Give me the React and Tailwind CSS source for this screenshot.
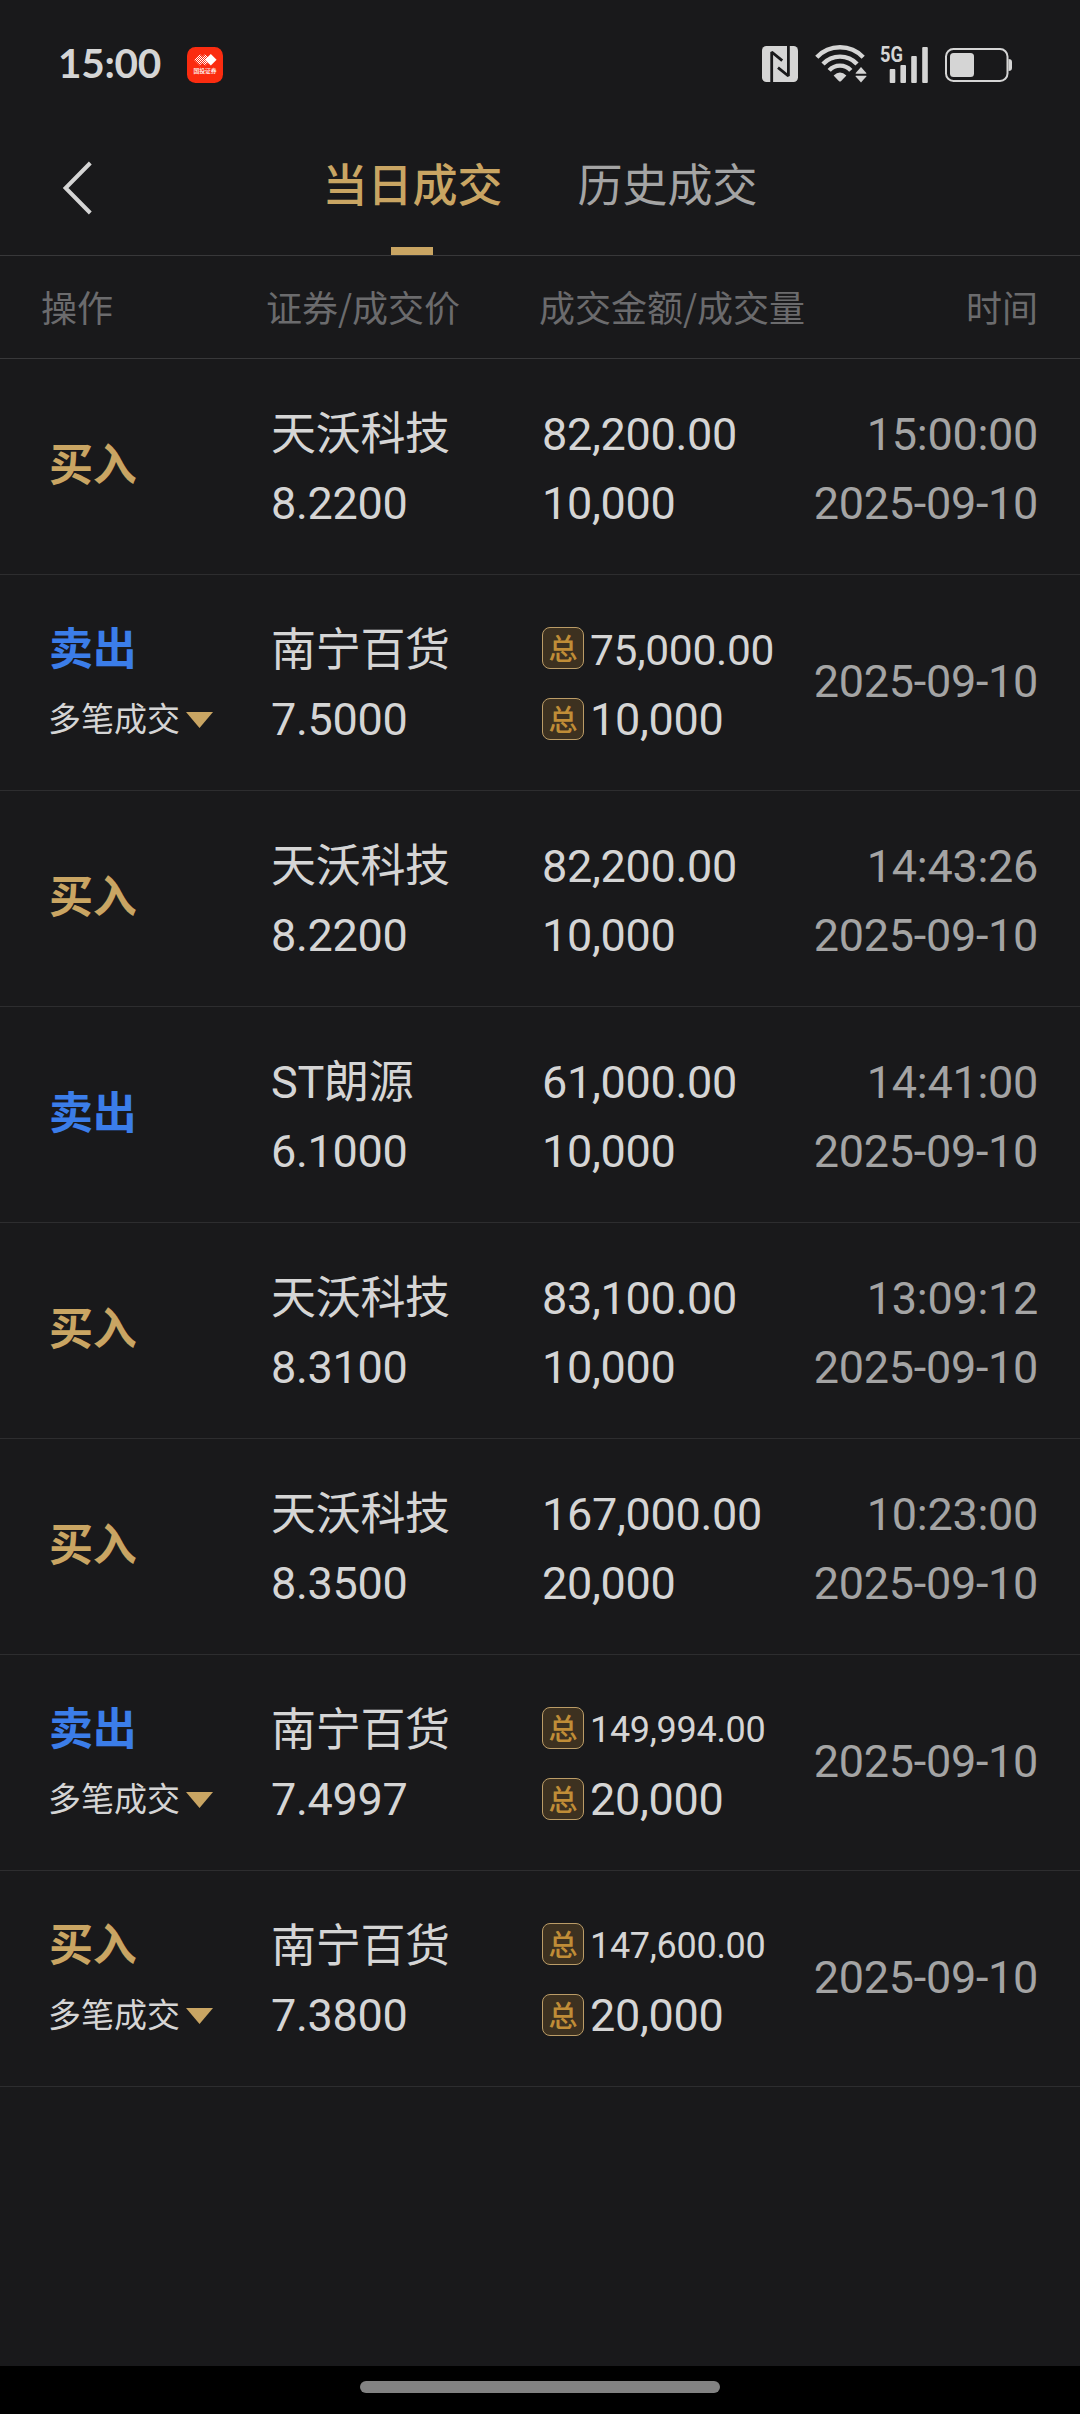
import React from 'react';

const trades = [
  { side: 'buy', name: '天沃科技', price: '8.2200', amount: '82,200.00', volume: '10,000', time: '15:00:00', date: '2025-09-10' },
  { side: 'sell', multi: true, name: '南宁百货', price: '7.5000', amount: '75,000.00', volume: '10,000', date: '2025-09-10' },
  { side: 'buy', name: '天沃科技', price: '8.2200', amount: '82,200.00', volume: '10,000', time: '14:43:26', date: '2025-09-10' },
  { side: 'sell', name: 'ST朗源', price: '6.1000', amount: '61,000.00', volume: '10,000', time: '14:41:00', date: '2025-09-10' },
  { side: 'buy', name: '天沃科技', price: '8.3100', amount: '83,100.00', volume: '10,000', time: '13:09:12', date: '2025-09-10' },
  { side: 'buy', name: '天沃科技', price: '8.3500', amount: '167,000.00', volume: '20,000', time: '10:23:00', date: '2025-09-10' },
  { side: 'sell', multi: true, name: '南宁百货', price: '7.4997', amount: '149,994.00', volume: '20,000', date: '2025-09-10' },
  { side: 'buy', multi: true, name: '南宁百货', price: '7.3800', amount: '147,600.00', volume: '20,000', date: '2025-09-10' },
];

const AppBadge = () => (
  <svg width="36" height="36" viewBox="0 0 36 36">
    <defs>
      <pattern id="dots" width="2" height="2" patternUnits="userSpaceOnUse">
        <rect width="1" height="1" fill="#fff" />
        <rect x="1" y="1" width="1" height="1" fill="#fff" />
      </pattern>
    </defs>
    <rect width="36" height="36" rx="8.5" fill="#fb2c10" />
    <path d="M12.8 7 L18.4 12.8 L12.8 18.6 L7 12.8Z" fill="url(#dots)" />
    <path d="M18.2 7 L24 12.8 L18.2 18.6 L12.4 12.8Z" fill="url(#dots)" />
    <path d="M23.8 7 L29.6 12.8 L23.8 18.6 L18 12.8Z" fill="#fff" />
    <text x="18" y="26" textAnchor="middle" fontSize="5.8" fontWeight="500" fill="#fff" className="font-['Noto_Sans_CJK_SC',sans-serif]">国投证券</text>
  </svg>
);

const NfcIcon = () => (
  <svg width="36" height="36" viewBox="0 0 36 36">
    <rect width="36" height="36" rx="4.5" fill="#d5d5d5" />
    <path d="M9.7 36 V6 L20.2 14.7" fill="none" stroke="#19191b" strokeWidth="2.8" strokeLinejoin="bevel" />
    <path d="M26.4 0 V30 L16 21.6" fill="none" stroke="#19191b" strokeWidth="2.8" strokeLinejoin="bevel" />
  </svg>
);

const WifiIcon = () => (
  <svg width="52" height="38" viewBox="0 0 52 38">
    <g fill="none" stroke="#d5d5d5" strokeWidth="4.4">
      <path d="M1.8 12.2 A32 32 0 0 1 48.2 12.2" />
      <path d="M8 18.9 A23.5 23.5 0 0 1 42 18.9" />
      <path d="M14.2 25.4 A14.5 14.5 0 0 1 35.8 25.4" />
    </g>
    <path d="M18.6 30.6 Q25 24.4 31.4 30.6 L26.2 35.9 Q25 37 23.8 35.9Z" fill="#d5d5d5" />
    <path d="M46 22 L51.3 28 V28.8 H40.7 V28Z" fill="#d5d5d5" />
    <path d="M46 37.6 L51.3 31.6 V30.8 H40.7 V31.6Z" fill="#d5d5d5" />
  </svg>
);

const SignalIcon = () => (
  <svg className="overflow-visible" width="50" height="38" viewBox="0 0 50 38">
    <text x="0" y="17.2" fontSize="21.5" fontWeight="700" textLength="23" lengthAdjust="spacingAndGlyphs" fill="#d5d5d5" className="font-['Roboto',sans-serif]">5G</text>
    <g fill="#d5d5d5">
      <rect x="9.7" y="24" width="5.6" height="14" rx="1" />
      <rect x="20.4" y="20" width="5.6" height="18" rx="1" />
      <rect x="31.2" y="11" width="5.6" height="27" rx="1" />
      <rect x="42.2" y="2" width="5.6" height="36" rx="1" />
    </g>
  </svg>
);

const BatteryIcon = () => (
  <svg width="68" height="34" viewBox="0 0 68 34">
    <rect x="1" y="1" width="61.5" height="32" rx="7.5" fill="none" stroke="#d5d5d5" strokeWidth="2" />
    <rect x="5" y="5" width="24" height="24" rx="3.5" fill="#d5d5d5" />
    <path d="M63.5 11 Q67 11 67 14 V20 Q67 23 63.5 23Z" fill="#d5d5d5" />
  </svg>
);

const StatusBar = () => (
  <div className="flex h-[128px] items-center justify-between pl-[58px] pr-[67px]">
    <div className="flex items-center">
      <span className="w-[129px] pb-[2px] font-['Lato',sans-serif] text-[40.5px] leading-none font-bold tracking-[-0.3px] text-[#d5d5d5]">15:00</span>
      <div className="pt-[2px]"><AppBadge /></div>
    </div>
    <div className="flex items-center">
      <NfcIcon />
      <div className="ml-[17px]"><WifiIcon /></div>
      <div className="ml-[13px]"><SignalIcon /></div>
      <div className="ml-[15px] pt-[2px]"><BatteryIcon /></div>
    </div>
  </div>
);

const NavBar = () => (
  <div className="relative flex h-[128px] justify-center gap-[74px] border-b border-[#38383a] text-[45px] leading-[109px]">
    <svg className="absolute left-[62px] top-[33px]" width="32" height="54" viewBox="0 0 32 54">
      <path d="M28.3 2 L3.6 27 L28.3 52" fill="none" stroke="#d5d5d5" strokeWidth="4" />
    </svg>
    <div className="flex flex-col items-center justify-between pr-px text-[#c9a563]">
      <span className="font-medium">当日成交</span>
      <div className="h-2 w-[42px] bg-[#c9a563]" />
    </div>
    <span className="text-[#a4a4a4]">历史成交</span>
  </div>
);

const TableHead = () => (
  <div className="flex h-[103px] items-center border-b border-[#38383a] pb-[2px] pl-[41px] pr-[42px] text-4xl text-[#6b6b6d]">
    <span className="w-[225px]">操作</span>
    <span className="w-[273px]">证券/成交价</span>
    <span className="flex-1">成交金额/成交量</span>
    <span>时间</span>
  </div>
);

const TotalBadge = () => (
  <span className="mr-[6px] flex h-[42px] w-[42px] shrink-0 items-center justify-center rounded-lg border border-[#bb9c67] bg-[#3d3120] pb-[2px] font-['Noto_Sans_CJK_SC',sans-serif] text-[29px] leading-[38px] font-medium tracking-normal text-[#c08d37]">
    总
  </span>
);

const TradeRow = ({ trade }) => {
  const sell = trade.side === 'sell';
  // long totals shrink so they stay clear of the date column
  const amountSize = !trade.multi ? 'text-[45px]' : trade.amount.length > 9 ? 'text-[36px]' : 'text-[42.5px]';

  return (
    <div className="flex h-[216px] border-b border-[#2d2d2f] pr-[42px] pt-[41px] font-['Roboto','Noto_Sans_CJK_SC',sans-serif] text-[45px] leading-[69px] tracking-[-0.3px] text-[#d5d5d5]">
      <div className={`w-[271px] shrink-0 ${trade.multi ? '' : 'pt-[32px]'}`}>
        <div className={`pl-[49px] text-[44px] font-bold ${sell ? 'text-[#3b7de9]' : 'text-[#c9a563]'}`}>{sell ? '卖出' : '买入'}</div>
        {trade.multi && (
          <div className="flex items-center pl-[48px] text-[33px] tracking-normal">
            多笔成交
            <svg className="ml-[6px]" width="27" height="16" viewBox="0 0 27 16">
              <path d="M0 0 H27 L13.5 16Z" fill="#c9a563" />
            </svg>
          </div>
        )}
      </div>
      <div className="w-[271px] shrink-0">
        <div>{trade.name}</div>
        <div>{trade.price}</div>
      </div>
      <div className="flex-1">
        <div className={`flex items-center whitespace-nowrap ${amountSize}`}>
          {trade.multi && <div className="-mt-[5px]"><TotalBadge /></div>}
          {trade.amount}
        </div>
        <div className="flex items-center">
          {trade.multi && <div className="-mt-px"><TotalBadge /></div>}
          {trade.volume}
        </div>
      </div>
      <div className={`shrink-0 text-right text-[#a4a4a4] ${trade.time ? '' : 'pt-[31px]'}`}>
        {trade.time && <div>{trade.time}</div>}
        <div>{trade.date}</div>
      </div>
    </div>
  );
};

export default function App() {
  return (
    <div className="flex h-[2414px] w-[1080px] flex-col overflow-hidden bg-[#19191b] font-['Noto_Sans_CJK_SC',sans-serif]">
      <StatusBar />
      <NavBar />
      <TableHead />
      <div className="flex-1">
        {trades.map((trade, i) => (
          <TradeRow key={i} trade={trade} />
        ))}
      </div>
      <div className="flex h-12 justify-center bg-black pt-[15px]">
        <div className="h-3 w-[360px] rounded-full bg-[#828282]" />
      </div>
    </div>
  );
}
